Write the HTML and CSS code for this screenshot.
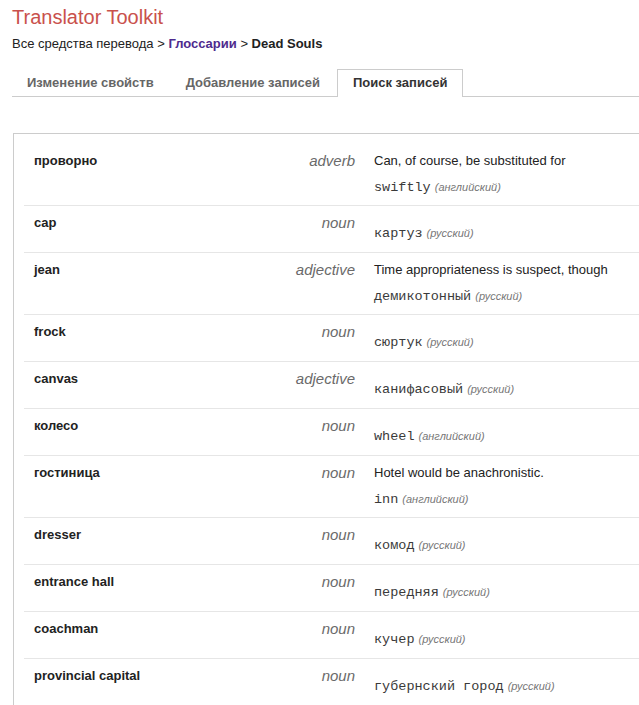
FILE: index.html
```html
<!DOCTYPE html>
<html lang="ru">
<head>
<meta charset="utf-8">
<title>Translator Toolkit</title>
<link rel="stylesheet" href="styles.css">
</head>
<body>
<div class="page">
  <h1 class="title">Translator Toolkit</h1>
  <div class="crumbs">Все средства перевода &gt; <a class="crumb-link" href="#">Глоссарии</a> &gt; <b class="crumb-current">Dead Souls</b></div>
  <div class="tabs">
    <div class="tab">Изменение свойств</div>
    <div class="tab">Добавление записей</div>
    <div class="tab tab-active">Поиск записей</div>
  </div>
  <div class="panel">
    <div class="entry">
      <div class="term">проворно</div>
      <div class="pos">adverb</div>
      <div class="info"><div class="desc">Can, of course, be substituted for</div><div class="trans"><span class="word">swiftly</span><span class="lang">(английский)</span></div></div>
    </div>
    <div class="entry nodesc">
      <div class="term">cap</div>
      <div class="pos">noun</div>
      <div class="info"><div class="trans"><span class="word">картуз</span><span class="lang">(русский)</span></div></div>
    </div>
    <div class="entry">
      <div class="term">jean</div>
      <div class="pos">adjective</div>
      <div class="info"><div class="desc">Time appropriateness is suspect, though</div><div class="trans"><span class="word">демикотонный</span><span class="lang">(русский)</span></div></div>
    </div>
    <div class="entry nodesc">
      <div class="term">frock</div>
      <div class="pos">noun</div>
      <div class="info"><div class="trans"><span class="word">сюртук</span><span class="lang">(русский)</span></div></div>
    </div>
    <div class="entry nodesc">
      <div class="term">canvas</div>
      <div class="pos">adjective</div>
      <div class="info"><div class="trans"><span class="word">канифасовый</span><span class="lang">(русский)</span></div></div>
    </div>
    <div class="entry nodesc">
      <div class="term">колесо</div>
      <div class="pos">noun</div>
      <div class="info"><div class="trans"><span class="word">wheel</span><span class="lang">(английский)</span></div></div>
    </div>
    <div class="entry">
      <div class="term">гостиница</div>
      <div class="pos">noun</div>
      <div class="info"><div class="desc">Hotel would be anachronistic.</div><div class="trans"><span class="word">inn</span><span class="lang">(английский)</span></div></div>
    </div>
    <div class="entry nodesc">
      <div class="term">dresser</div>
      <div class="pos">noun</div>
      <div class="info"><div class="trans"><span class="word">комод</span><span class="lang">(русский)</span></div></div>
    </div>
    <div class="entry nodesc">
      <div class="term">entrance hall</div>
      <div class="pos">noun</div>
      <div class="info"><div class="trans"><span class="word">передняя</span><span class="lang">(русский)</span></div></div>
    </div>
    <div class="entry nodesc">
      <div class="term">coachman</div>
      <div class="pos">noun</div>
      <div class="info"><div class="trans"><span class="word">кучер</span><span class="lang">(русский)</span></div></div>
    </div>
    <div class="entry nodesc">
      <div class="term">provincial capital</div>
      <div class="pos">noun</div>
      <div class="info"><div class="trans"><span class="word">губернский город</span><span class="lang">(русский)</span></div></div>
    </div>
  </div>
</div>
</body>
</html>
```

FILE: styles.css
```css
html, body {
  margin: 0;
  padding: 0;
  background: #fff;
}
body {
  font-family: "Liberation Sans", Arial, sans-serif;
  color: #222;
  overflow: hidden;
}
.page {
  padding-left: 12px;
}
.title {
  margin: 0;
  padding-top: 5px;
  font-size: 20px;
  line-height: 24px;
  font-weight: normal;
  color: #c9514c;
}
.crumbs {
  margin-top: 6px;
  font-size: 13px;
  line-height: 18px;
  color: #222;
}
.crumb-link {
  color: #4e2a8e;
  font-weight: bold;
  text-decoration: none;
}
.crumb-current {
  color: #222;
}
.tabs {
  display: flex;
  margin-top: 16px;
  border-bottom: 1px solid #ccc;
  gap: 2px;
}
.tab {
  border: 1px solid transparent;
  border-bottom: 0;
  padding: 0 14px;
  font-size: 13px;
  line-height: 26px;
  font-weight: bold;
  color: #666;
}
.tab-active {
  border-color: #ccc;
  background: #fff;
  color: #333;
  margin-bottom: -1px;
  padding: 0 15px 1px;
}
.panel {
  margin-top: 36px;
  margin-left: 1px;
  border-top: 1px solid #ccc;
  border-left: 1px solid #ccc;
  padding: 10px 0 0 10px;
}
.entry {
  display: grid;
  grid-template-columns: 220px 120px 1fr;
  padding: 8px 0 9px;
  border-bottom: 1px solid #e6e6e6;
}
.term {
  padding-left: 10px;
  font-size: 13px;
  line-height: 18px;
  font-weight: bold;
  color: #222;
}
.pos {
  padding-right: 9px;
  text-align: right;
  font-size: 15px;
  line-height: 18px;
  font-style: italic;
  color: #6a6a6a;
}
.info {
  padding-left: 10px;
}
.desc {
  font-size: 13px;
  line-height: 18px;
  color: #222;
}
.trans {
  display: flex;
  align-items: baseline;
  gap: 4px;
  height: 18px;
  margin-top: 8px;
}
.nodesc .trans {
  margin-top: 10px;
  margin-bottom: 1px;
}
.word {
  font-family: "Liberation Mono", "Courier New", monospace;
  font-size: 13.5px;
  line-height: 18px;
  color: #3a3a3a;
}
.lang {
  font-size: 11px;
  line-height: 18px;
  font-style: italic;
  color: #777;
}
```
